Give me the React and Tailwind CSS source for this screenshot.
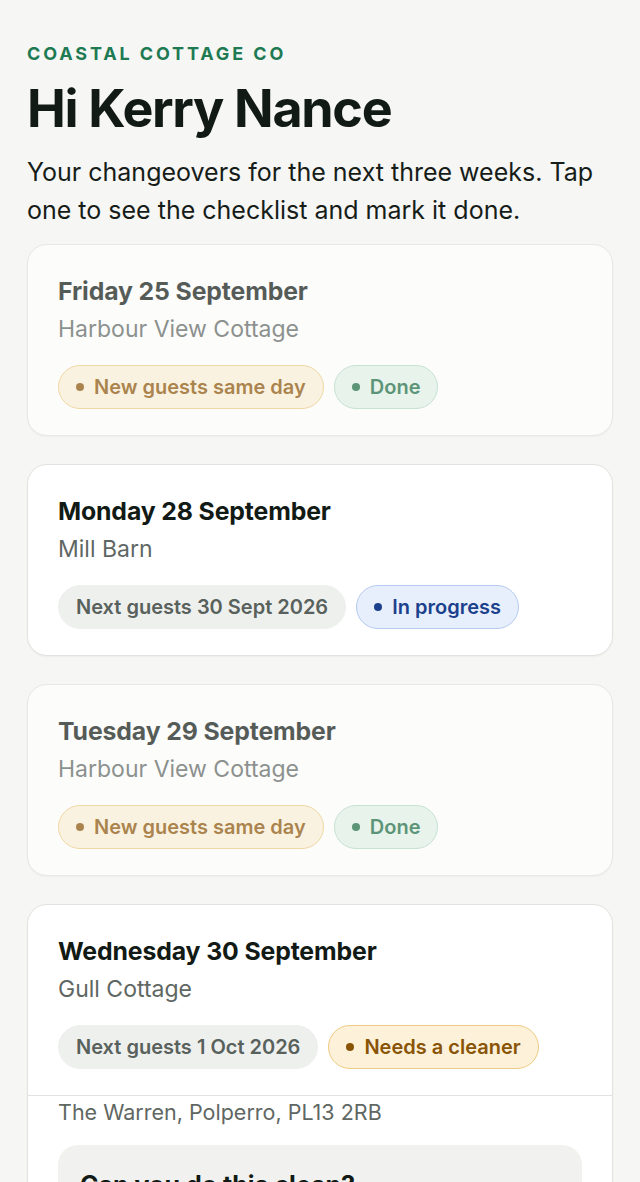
import React from "react";

const font = { fontFamily: "Inter, 'Noto Sans', sans-serif" };

function Badge({ tone, dot, children }) {
  const tones = {
    amber: "bg-[#fdf1da] border-[#edcb82] text-[#8a5406]",
    green: "bg-[#e1f2e8] border-[#b3dbc4] text-[#1c6b44]",
    blue: "bg-[#e7effc] border-[#b5caf0] text-[#1c418c]",
    grey: "bg-[#eef0ee] border-[#eef0ee] text-[#59615c]",
  };
  const dots = {
    amber: "bg-[#8a5406]",
    green: "bg-[#1c6b44]",
    blue: "bg-[#1c418c]",
    grey: "bg-[#59615c]",
  };
  return (
    <span
      className={`inline-flex h-[44px] items-center gap-[10px] rounded-full border px-[17px] text-[20px] font-semibold leading-none ${tones[tone]}`}
    >
      {dot && <span className={`h-[8px] w-[8px] rounded-full ${dots[tone]}`} />}
      {children}
    </span>
  );
}

function CardTop({ title, place, badges }) {
  return (
    <div className="px-[30px] pt-[31px] pb-[26px]">
      <div className="text-[24.8px] font-bold leading-[30px] tracking-[-0.005em] text-[#121a15]">
        {title}
      </div>
      <div className="mt-[8px] text-[23px] leading-[30px] text-[#5f6763]">{place}</div>
      <div className="mt-[21px] flex items-center gap-[10px]">{badges}</div>
    </div>
  );
}

export default function App() {
  return (
    <div style={font} className="min-h-[1182px] bg-[#f6f6f4] px-[27px] pt-[40px] pb-10">
      <div className="text-[18px] font-bold uppercase leading-[28px] tracking-[0.16em] text-[#1e7a53]">
        Coastal Cottage Co
      </div>
      <h1 className="mt-[12px] text-[52px] font-bold leading-[58px] tracking-[-0.025em] text-[#111a14]">
        Hi Kerry Nance
      </h1>
      <p className="mt-[15px] text-[25px] leading-[38px] text-[#161d19]">
        Your changeovers for the next three weeks. Tap one to see the checklist and mark it done.
      </p>

      <div className="mt-[15px] flex flex-col gap-[28px]">
        <div className="overflow-hidden rounded-[20px] border border-[#e2e3df] bg-white opacity-70 shadow-[0_1px_2px_rgba(0,0,0,0.04)]">
          <CardTop
            title="Friday 25 September"
            place="Harbour View Cottage"
            badges={
              <>
                <Badge tone="amber" dot>New guests same day</Badge>
                <Badge tone="green" dot>Done</Badge>
              </>
            }
          />
        </div>

        <div className="overflow-hidden rounded-[20px] border border-[#e2e3df] bg-white shadow-[0_1px_2px_rgba(0,0,0,0.04)]">
          <CardTop
            title="Monday 28 September"
            place="Mill Barn"
            badges={
              <>
                <Badge tone="grey">Next guests 30 Sept 2026</Badge>
                <Badge tone="blue" dot>In progress</Badge>
              </>
            }
          />
        </div>

        <div className="overflow-hidden rounded-[20px] border border-[#e2e3df] bg-white opacity-70 shadow-[0_1px_2px_rgba(0,0,0,0.04)]">
          <CardTop
            title="Tuesday 29 September"
            place="Harbour View Cottage"
            badges={
              <>
                <Badge tone="amber" dot>New guests same day</Badge>
                <Badge tone="green" dot>Done</Badge>
              </>
            }
          />
        </div>

        <div className="overflow-hidden rounded-[20px] border border-[#e2e3df] bg-white shadow-[0_1px_2px_rgba(0,0,0,0.04)]">
          <CardTop
            title="Wednesday 30 September"
            place="Gull Cottage"
            badges={
              <>
                <Badge tone="grey">Next guests 1 Oct 2026</Badge>
                <Badge tone="amber" dot>Needs a cleaner</Badge>
              </>
            }
          />
          <div className="border-t border-[#e2e3df] px-[30px] pb-[30px]">
            <div className="text-[21.5px] leading-[33px] text-[#5f6763]">
              The Warren, Polperro, PL13 2RB
            </div>
            <div className="mt-[16px] rounded-[20px] bg-[#f1f2f0] px-[22px] pt-[25px] pb-[22px]">
              <div className="text-[25px] font-bold leading-[30px] text-[#121a15]">
                Can you do this clean?
              </div>
              <div className="mt-[6px] text-[19px] leading-[28px] text-[#5f6763]">
                Accept the job to add it to your changeovers.
              </div>
            </div>
          </div>
        </div>
      </div>
    </div>
  );
}
